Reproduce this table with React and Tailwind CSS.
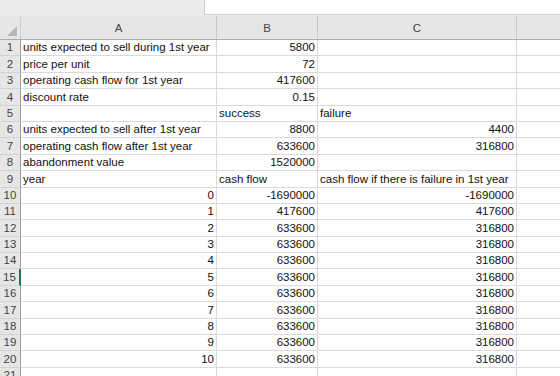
import React from "react";

const rows = [
  ["units expected to sell during 1st year", "5800", ""],
  ["price per unit", "72", ""],
  ["operating cash flow for 1st year", "417600", ""],
  ["discount rate", "0.15", ""],
  ["", { t: "success", l: true }, { t: "failure", l: true }],
  ["units expected to sell after 1st year", "8800", "4400"],
  ["operating cash flow after 1st year", "633600", "316800"],
  ["abandonment value", "1520000", ""],
  ["year", { t: "cash flow", l: true }, { t: "cash flow if there is failure in 1st year", l: true }],
  [{ t: "0", r: true }, "-1690000", "-1690000"],
  [{ t: "1", r: true }, "417600", "417600"],
  [{ t: "2", r: true }, "633600", "316800"],
  [{ t: "3", r: true }, "633600", "316800"],
  [{ t: "4", r: true }, "633600", "316800"],
  [{ t: "5", r: true }, "633600", "316800"],
  [{ t: "6", r: true }, "633600", "316800"],
  [{ t: "7", r: true }, "633600", "316800"],
  [{ t: "8", r: true }, "633600", "316800"],
  [{ t: "9", r: true }, "633600", "316800"],
  [{ t: "10", r: true }, "633600", "316800"],
  ["", "", ""],
];

function Cell({ v, defRight }) {
  let text = v;
  let right = defRight;
  if (typeof v === "object") {
    text = v.t;
    if (v.l) right = false;
    if (v.r) right = true;
  }
  return (
    <div
      className={
        "border-r border-b border-[#dadada] bg-white flex items-end leading-[13px] pb-[1px] whitespace-nowrap overflow-visible " +
        (right ? "justify-end pr-[2px]" : "justify-start pl-[2px]")
      }
    >
      {text}
    </div>
  );
}

export default function App() {
  return (
    <div
      className="w-[560px] h-[376px] overflow-hidden bg-white text-[11.5px] text-[#111]"
      style={{ fontFamily: '"Liberation Sans", Arial, sans-serif' }}
    >
      {/* top band */}
      <div className="h-[16px] bg-[#ececec] flex">
        <div className="w-[204px]" />
        <div className="flex-1 h-[15px] bg-white border-l border-b border-[#cfcfcf]" />
      </div>
      {/* column header */}
      <div className="grid grid-cols-[21px_196px_101px_199px_1fr] h-[24px] bg-[#e6e6e6] border-b border-[#ababab] text-[#444]">
        <div className="relative border-r border-[#d0d0d0]">
          <div className="absolute right-[3px] bottom-[3px] w-0 h-0 border-l-[10px] border-l-transparent border-b-[10px] border-b-[#b8b8b8]" />
        </div>
        <div className="flex items-end justify-center leading-[13px] pb-[4px] border-r border-[#c8c8c8]">A</div>
        <div className="flex items-end justify-center leading-[13px] pb-[4px] border-r border-[#c8c8c8]">B</div>
        <div className="flex items-end justify-center leading-[13px] pb-[4px] border-r border-[#c8c8c8]">C</div>
        <div />
      </div>
      {/* body */}
      <div className="grid grid-cols-[21px_196px_101px_199px_1fr] auto-rows-[16.4px]">
        {rows.map((r, i) => (
          <React.Fragment key={i}>
            <div
              className={
                "bg-[#e6e6e6] border-b border-[#d2d2d2] flex items-end justify-center leading-[13px] pb-[1px] text-[#444] " +
                (i === 14 ? "border-r-2 border-r-[#217346] bg-[#d8d8d8]" : "border-r border-r-[#9f9f9f]")
              }
            >
              {i + 1}
            </div>
            <Cell v={r[0]} defRight={false} />
            <Cell v={r[1]} defRight={true} />
            <Cell v={r[2]} defRight={true} />
            <div className="border-b border-[#dadada] bg-white" />
          </React.Fragment>
        ))}
      </div>
    </div>
  );
}
